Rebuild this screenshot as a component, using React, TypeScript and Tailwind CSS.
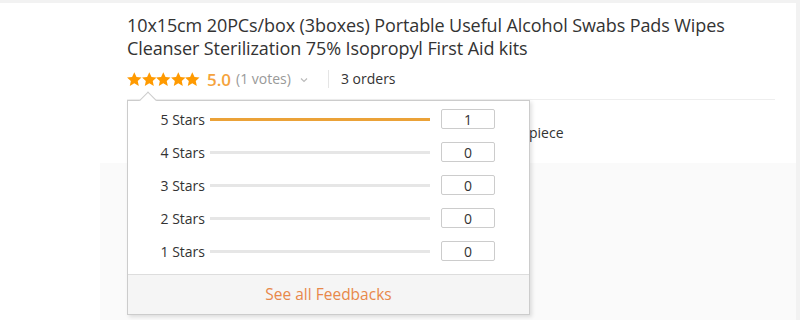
import React from 'react';

const rows = [
  { label: '5 Stars', count: 1 },
  { label: '4 Stars', count: 0 },
  { label: '3 Stars', count: 0 },
  { label: '2 Stars', count: 0 },
  { label: '1 Stars', count: 0 },
];
const total = 1;

const Star = () => (
  <svg width="14.6" height="15" viewBox="1 1 22 22" className="shrink-0">
    <path
      d="M12 1.2l3.3 7 7.6.8-5.7 5.1 1.6 7.6L12 17.8l-6.8 3.9 1.6-7.6L1.1 9l7.6-.8z"
      fill="#ff9a00"
    />
  </svg>
);

const App: React.FC = () => {
  return (
    <div className="w-[800px] h-[320px] overflow-hidden bg-[#f2f2f2] pt-[3px] font-['Open_Sans',sans-serif] text-[#333]">
      <div className="relative w-[796px] h-[317px] bg-white flex flex-col">
        <div className="flex">
          <div className="w-[127px] shrink-0" />
          <div className="w-[648px]">
            <h1 className="pt-[11px] text-[18px] leading-[23px] text-[#333] font-normal tracking-[-0.1px]">
              10x15cm 20PCs/box (3boxes) Portable Useful Alcohol Swabs Pads Wipes Cleanser Sterilization 75% Isopropyl First Aid kits
            </h1>
            <div className="flex items-center h-[20px] mt-[9px]">
              <div className="flex">
                {[0, 1, 2, 3, 4].map((i) => (
                  <Star key={i} />
                ))}
              </div>
              <span className="ml-[7px] text-[17px] font-semibold text-[#f5a33c] leading-none">5.0</span>
              <span className="ml-[5px] text-[14px] text-[#999] leading-none">(1 votes)</span>
              <svg width="10" height="10" viewBox="0 0 10 10" className="ml-[8px] mt-[2px]">
                <path d="M2 3.5l3 3 3-3" stroke="#bbb" strokeWidth="1.2" fill="none" />
              </svg>
              <div className="ml-[19px] w-px h-[18px] bg-[#e5e5e5]" />
              <span className="ml-[12px] text-[14px] leading-none">3 orders</span>
            </div>
            <div className="mt-[10px] border-b border-[#eee]" />
            <div className="h-[63px] flex items-center pt-[2px]">
              <span className="ml-[402px] text-[14px] text-[#333]">piece</span>
            </div>
          </div>
        </div>
        <div className="flex-1 ml-[100px] bg-[#fafafa]" />

        {/* rating popup */}
        <div className="absolute left-[127px] top-[97px] w-[403px] bg-white border border-[#ccc] shadow-[2px_2px_4px_rgba(0,0,0,0.12)]">
          <div className="absolute -top-[7px] left-[14px] w-[12px] h-[12px] rotate-45 bg-white border-t border-l border-[#ccc]" />
          <div className="flex flex-col gap-[13px] pt-[8px] pb-[13px]">
            {rows.map((r) => (
              <div key={r.label} className="flex items-center h-[20px]">
                <span className="w-[77px] text-right text-[14px] text-[#333]">{r.label}</span>
                <div className="ml-[5px] w-[220px] h-[3px] bg-[#e6e6e6]">
                  <div className="h-full bg-[#eba238]" style={{ width: `${(r.count / total) * 100}%` }} />
                </div>
                <div className="ml-[11px] w-[54px] h-[20px] border border-[#ccc] rounded-[2px] flex items-center justify-center text-[14px]">
                  {r.count}
                </div>
              </div>
            ))}
          </div>
          <div className="h-[40px] border-t border-[#ddd] bg-[#f5f5f5] flex items-center justify-center">
            <span className="text-[15.5px] text-[#e8884a]">See all Feedbacks</span>
          </div>
        </div>
      </div>
    </div>
  );
};

export default App;
